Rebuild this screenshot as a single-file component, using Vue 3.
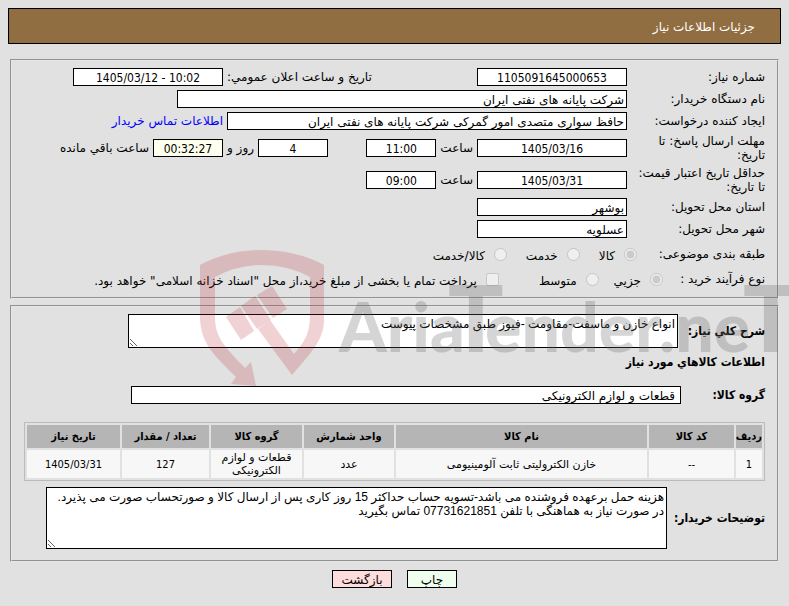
<script setup>
import { reactive } from "vue"

const need = reactive({
  number: "1105091645000653",
  announced: "1405/03/12 - 10:02",
  buyer: "شرکت پایانه های نفتی ایران",
  creator: "حافظ سواری متصدی امور گمرکی شرکت پایانه های نفتی ایران",
  replyDate: "1405/03/16",
  replyTime: "11:00",
  days: "4",
  remaining: "00:32:27",
  validDate: "1405/03/31",
  validTime: "09:00",
  province: "بوشهر",
  city: "عسلویه",
  kind: "kala",
  process: "small",
  treasury: false,
  summary: "انواع خازن و ماسفت-مقاومت -فیوز طبق مشخصات پیوست",
  group: "قطعات و لوازم الکترونیکی",
  notes: "هزینه حمل برعهده فروشنده می باشد-تسویه حساب حداکثر 15 روز کاری پس از ارسال کالا و صورتحساب صورت می پذیرد.\nدر صورت نیاز به هماهنگی با تلفن 07731621851 تماس بگیرید"
})

const items = [
  {
    row: "1",
    code: "--",
    name: "خازن الکترولیتی ثابت آلومینیومی",
    unit: "عدد",
    group: "قطعات و لوازم الکترونیکی",
    count: "127",
    date: "1405/03/31"
  }
]

function printPage() {
  window.print()
}

function goBack() {
  window.history.back()
}
</script>

<template>
  <div class="page" dir="rtl">
    <h1 class="header">جزئیات اطلاعات نیاز</h1>

    <form @submit.prevent>
      <section class="box details">
        <div class="row">
          <label class="name" for="number">شماره نیاز:</label>
          <div class="main">
            <input id="number" v-model="need.number" class="date" dir="ltr" readonly>
            <label class="second" for="announced">تاریخ و ساعت اعلان عمومي:</label>
          </div>
          <input id="announced" v-model="need.announced" class="date" dir="ltr" readonly>
        </div>
        <div class="row">
          <label class="name" for="buyer">نام دستگاه خریدار:</label>
          <input id="buyer" v-model="need.buyer" class="wide" readonly>
        </div>
        <div class="row">
          <label class="name" for="creator">ایجاد کننده درخواست:</label>
          <div class="main">
            <input id="creator" v-model="need.creator" class="fill" readonly>
          </div>
          <a href="#">اطلاعات تماس خریدار</a>
        </div>
        <div class="row tall">
          <label class="name" for="replyDate">مهلت ارسال پاسخ: تا تاریخ:</label>
          <div class="main">
            <input id="replyDate" v-model="need.replyDate" class="date" readonly>
            <label for="replyTime">ساعت</label>
            <input id="replyTime" v-model="need.replyTime" class="time" readonly>
            <input id="days" v-model="need.days" class="time days" readonly>
            <label for="days">روز و</label>
          </div>
          <input id="remaining" v-model="need.remaining" class="time remaining" readonly>
          <label for="remaining">ساعت باقي مانده</label>
        </div>
        <div class="row tall">
          <label class="name" for="validDate">حداقل تاریخ اعتبار قیمت: تا تاریخ:</label>
          <div class="main">
            <input id="validDate" v-model="need.validDate" class="date" readonly>
            <label for="validTime">ساعت</label>
            <input id="validTime" v-model="need.validTime" class="time" readonly>
          </div>
        </div>
        <div class="row">
          <label class="name" for="province">استان محل تحویل:</label>
          <input id="province" v-model="need.province" class="place" readonly>
        </div>
        <div class="row">
          <label class="name" for="city">شهر محل تحویل:</label>
          <input id="city" v-model="need.city" class="place" readonly>
        </div>
        <div class="row choice">
          <span class="name">طبقه بندی موضوعی:</span>
          <label><input v-model="need.kind" type="radio" value="kala" disabled><span>کالا</span></label>
          <label><input v-model="need.kind" type="radio" value="service" disabled><span>خدمت</span></label>
          <label><input v-model="need.kind" type="radio" value="both" disabled><span>کالا/خدمت</span></label>
        </div>
        <div class="row choice process">
          <span class="name">نوع فرآیند خرید :</span>
          <label><input v-model="need.process" type="radio" value="small" disabled><span>جزیي</span></label>
          <label class="medium"><input v-model="need.process" type="radio" value="medium" disabled><span>متوسط</span></label>
          <label><input v-model="need.treasury" type="checkbox" disabled><span>پرداخت تمام یا بخشی از مبلغ خرید،از محل "اسناد خزانه اسلامی" خواهد بود.</span></label>
        </div>
      </section>

      <section class="box goods">
        <div class="line">
          <label for="summary">شرح کلي نیاز:</label>
          <textarea id="summary" v-model="need.summary" class="summary"></textarea>
        </div>
        <h2>اطلاعات کالاهاي مورد نیاز</h2>
        <div class="line group">
          <label for="group">گروه کالا:</label>
          <input id="group" v-model="need.group" readonly>
        </div>
        <table>
          <colgroup>
            <col class="c-row"><col class="c-code"><col><col class="c-unit"><col class="c-group"><col class="c-count"><col class="c-date">
          </colgroup>
          <thead>
            <tr>
              <th>ردیف</th>
              <th>کد کالا</th>
              <th>نام کالا</th>
              <th>واحد شمارش</th>
              <th>گروه کالا</th>
              <th>تعداد / مقدار</th>
              <th>تاریخ نیاز</th>
            </tr>
          </thead>
          <tbody>
            <tr v-for="item in items" :key="item.row">
              <td class="num">{{ item.row }}</td>
              <td class="num">{{ item.code }}</td>
              <td>{{ item.name }}</td>
              <td>{{ item.unit }}</td>
              <td>{{ item.group }}</td>
              <td class="num">{{ item.count }}</td>
              <td class="num">{{ item.date }}</td>
            </tr>
          </tbody>
        </table>
        <div class="line remarks">
          <label for="notes">توضیحات خریدار:</label>
          <textarea id="notes" v-model="need.notes" class="notes"></textarea>
        </div>
      </section>

      <div class="buttons">
        <button type="button" class="print" @click="printPage">چاپ</button>
        <button type="button" class="back" @click="goBack">بازگشت</button>
      </div>
    </form>

    <!-- watermark -->
    <svg class="watermark" width="620" height="140" viewBox="0 0 620 140" aria-hidden="true">
      <g class="shield">
        <path d="M0 15Q28 0 62 0T124 15V70C124 90 110 104 92 125L58 79 70 70 94 104C105 92 110 82 110 66V27Q88 15 62 15T15 27V68C15 88 26 98 45 118L51 112 56 136 31 134 36 127C14 105 0 93 0 66Z" />
        <path d="M26 67 40 57 54 81 41 90Z" />
        <path d="M41 56 55 46 71 70 57 79Z" />
        <path d="M57 45 72 36 87 59 73 68Z" />
      </g>
      <text y="102" direction="ltr">
        <tspan x="139">Aria</tspan><tspan class="big" x="248">T</tspan><tspan x="285">ender</tspan><tspan x="459">.ne</tspan><tspan class="big" x="543">T</tspan>
      </text>
    </svg>
  </div>
</template>

<style>
body {
  background: #e1e1e1;
}
</style>

<style scoped>
.page {
  position: relative;
  overflow: hidden;
  padding: 8px;
  font-family: Tahoma, "DejaVu Sans", sans-serif;
  font-size: 12px;
  line-height: 14px;
  color: #000;
}

.header {
  margin: 0 0 15px;
  padding: 11px 25px 9px;
  border: 1px solid #000;
  background: #916d42;
  color: #fff;
  font-size: 12px;
  font-weight: normal;
  line-height: 14px;
}

.box {
  margin: 0 2px 6px;
  padding: 5px 12px;
  border: 2px groove #e6e6e6;
}

.details {
  padding-bottom: 7px;
}

.row {
  display: flex;
  align-items: center;
  gap: 4px;
  height: 22px;
}

.row.tall {
  height: 32px;
}

.name {
  flex: none;
  box-sizing: border-box;
  width: 134px;
  padding-left: 6px;
}

.main {
  display: flex;
  align-items: center;
  gap: 4px;
  width: 400px;
}

.second {
  margin-right: auto;
}

input,
textarea,
button {
  box-sizing: border-box;
  margin: 0;
  border: 1px solid #000;
  background: #fff;
  color: #000;
  font: inherit;
}

input {
  height: 18px;
  padding: 2px 2px 0;
}

.date,
.time,
.num {
  font-family: Tahoma, "DejaVu Sans Condensed", sans-serif;
  text-align: center;
}

.date {
  width: 150px;
}

.time {
  width: 70px;
}

.days {
  margin-right: auto;
}

.remaining {
  background: #ffffee;
}

.wide {
  width: 450px;
}

.fill {
  width: 100%;
}

.place {
  width: 150px;
}

a {
  color: #00f;
  text-decoration: none;
}

.choice {
  gap: 19px;
  height: 28px;
}

.choice .name {
  width: 109px;
  padding: 0;
}

.process {
  gap: 15px;
  height: 22px;
}

.process .name {
  width: 87px;
}

.process .medium {
  margin-left: 25px;
}

.choice label {
  display: flex;
  align-items: center;
  gap: 9px;
}

.choice label span {
  padding-top: 4px;
}

.choice label input {
  width: 13px;
  height: 13px;
}

.goods {
  padding: 7px 12px 11px;
}

.line {
  display: flex;
  align-items: center;
  gap: 4px;
}

.line label,
h2,
th {
  font-family: Tahoma, "DejaVu Sans Condensed", sans-serif;
  font-weight: bold;
}

.line label {
  width: 83px;
}

textarea {
  display: block;
  padding: 2px;
  font-family: Tahoma, "Liberation Sans", "DejaVu Sans", sans-serif;
}

.summary {
  width: 550px;
  height: 34px;
}

h2 {
  margin: 7px 0 17px;
  font-size: 12px;
}

.line.group label {
  width: 80px;
}

.group input {
  width: 550px;
  padding: 2px 5px 0;
}

table {
  width: 100%;
  margin: 18px 0 6px;
  table-layout: fixed;
  border: 1px solid #bbb;
  border-spacing: 2px;
  font-size: 11px;
  line-height: 13px;
  text-align: center;
}

th,
td {
  padding: 0 2px;
}

th {
  height: 23px;
  padding: 0;
  background: #b5b5b5;
}

td {
  height: 28px;
  background: #f7f7f7;
}

.c-row {
  width: 26px;
}

.c-code {
  width: 85px;
}

.c-unit {
  width: 90px;
}

.c-group {
  width: 91px;
}

.c-count {
  width: 87px;
}

.c-date {
  width: 93px;
}

.line.remarks label {
  width: 94px;
}

.notes {
  width: 621px;
  height: 62px;
}

.buttons {
  display: flex;
  justify-content: center;
  gap: 15px;
  margin: 8px 0;
}

button {
  height: 18px;
  padding: 2px 0 0;
}

.print {
  width: 50px;
  background: #eeffee;
}

.back {
  width: 60px;
  background: #ffdddd;
}

.watermark {
  position: absolute;
  top: 250px;
  left: 200px;
  pointer-events: none;
}

.shield {
  fill: #b8202c;
  opacity: 0.2;
}

.watermark text {
  fill: #666;
  opacity: 0.27;
  font-family: Lato, "Liberation Sans", sans-serif;
  font-size: 68px;
  font-weight: 900;
}

.watermark .big {
  font-size: 92px;
}
</style>
